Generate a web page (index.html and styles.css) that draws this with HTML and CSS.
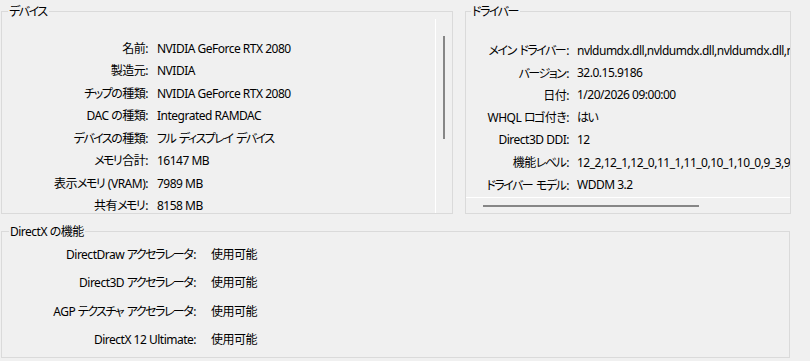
FILE: index.html
```html
<!DOCTYPE html>
<html lang="ja">
<head>
    <meta charset="UTF-8">
    <meta name="viewport" content="width=device-width, initial-scale=1.0">
    <title>ディスプレイ</title>
    <link rel="stylesheet" href="styles.css">
</head>
<body>
    <div class="top">
        <!-- デバイス -->
        <fieldset class="group device">
            <legend><span class="k">デバイス</span></legend>
            <div class="pane">
                <div class="rows device-rows">
                    <div class="label">名前:</div><div class="value">NVIDIA GeForce RTX 2080</div>
                    <div class="label">製造元:</div><div class="value">NVIDIA</div>
                    <div class="label"><span class="k">チップの</span>種類:</div><div class="value">NVIDIA GeForce RTX 2080</div>
                    <div class="label">DAC の種類:</div><div class="value">Integrated RAMDAC</div>
                    <div class="label"><span class="k">デバイスの</span>種類:</div><div class="value"><span class="k">フル</span> <span class="k">ディスプレイ</span> <span class="k">デバイス</span></div>
                    <div class="label"><span class="k">メモリ</span>合計:</div><div class="value">16147 MB</div>
                    <div class="label">表示<span class="k">メモリ</span> (VRAM):</div><div class="value">7989 MB</div>
                    <div class="label">共有<span class="k">メモリ</span>:</div><div class="value">8158 MB</div>
                </div>
                <div class="vscroll"><div class="thumb"></div></div>
            </div>
        </fieldset>

        <!-- ドライバー -->
        <fieldset class="group driver">
            <legend><span class="k">ドライバー</span></legend>
            <div class="pane-col">
                <div class="rows driver-rows">
                    <div class="label"><span class="k">メイン</span> <span class="k">ドライバー</span>:</div><div class="value">nvldumdx.dll,nvldumdx.dll,nvldumdx.dll,nvldumdx.dll</div>
                    <div class="label"><span class="k">バージョン</span>:</div><div class="value">32.0.15.9186</div>
                    <div class="label">日付:</div><div class="value">1/20/2026 09:00:00</div>
                    <div class="label">WHQL <span class="k">ロゴ</span>付き:</div><div class="value"><span class="k">はい</span></div>
                    <div class="label">Direct3D DDI:</div><div class="value">12</div>
                    <div class="label">機能<span class="k">レベル</span>:</div><div class="value">12_2,12_1,12_0,11_1,11_0,10_1,10_0,9_3,9_2,9_1</div>
                    <div class="label"><span class="k">ドライバー</span> <span class="k">モデル</span>:</div><div class="value">WDDM 3.2</div>
                </div>
                <div class="hscroll"><div class="thumb"></div></div>
            </div>
        </fieldset>
    </div>

    <!-- DirectX の機能 -->
    <fieldset class="group features">
        <legend>DirectX の機能</legend>
        <div class="rows feature-rows">
            <div class="label">DirectDraw <span class="k">アクセラレータ</span>:</div><div class="value">使用可能</div>
            <div class="label">Direct3D <span class="k">アクセラレータ</span>:</div><div class="value">使用可能</div>
            <div class="label">AGP <span class="k">テクスチャ</span> <span class="k">アクセラレータ</span>:</div><div class="value">使用可能</div>
            <div class="label">DirectX 12 Ultimate:</div><div class="value">使用可能</div>
        </div>
    </fieldset>
</body>
</html>
```

FILE: styles.css
```css
body {
    margin: 0;
    padding: 4px 0 0 1px;
    background-color: #f0f0f0;
    color: #000;
    font-family: "Noto Sans", "Noto Sans CJK JP", sans-serif;
    font-size: 12px;
    letter-spacing: -0.5px;
    font-feature-settings: "palt";
}

/* kana runs: Yu Gothic UI draws them narrower */
.k {
    letter-spacing: -1.5px;
    margin-right: 1px;
}

.top {
    display: flex;
    gap: 12px;
}

.group {
    margin: 0;
    padding: 0;
    min-width: 0;
    border: 1px solid #dadada;
}

.group legend {
    padding: 0 1px;
    line-height: 15px;
}

.device {
    width: 452px;
    box-sizing: border-box;
}

.device legend {
    margin-left: 6px;
}

.driver {
    width: 326px;
    box-sizing: border-box;
}

.driver legend {
    margin-left: 5px;
}

.pane {
    display: flex;
    height: 194px;
}

.pane-col {
    display: flex;
    flex-direction: column;
    height: 194px;
}

.rows {
    display: grid;
    align-content: start;
    white-space: nowrap;
    overflow: hidden;
}

.rows .label {
    text-align: right;
}

.device-rows {
    flex: 1;
    padding-top: 23.5px;
    grid-template-columns: 146px 1fr;
    grid-auto-rows: 12px;
    row-gap: 10.5px;
    column-gap: 9px;
    line-height: 12px;
}

.driver-rows {
    flex: 1;
    padding-top: 20px;
    grid-template-columns: 103px 1fr;
    grid-auto-rows: 22.4px;
    column-gap: 8px;
    align-items: center;
}

.vscroll {
    width: 16px;
    border-left: 1px solid #fff;
}

.vscroll .thumb {
    width: 2px;
    height: 103px;
    margin: 17px 0 0 7px;
    background-color: #868686;
}

.hscroll {
    height: 15px;
    border-top: 1px solid #fff;
}

.hscroll .thumb {
    width: 216px;
    height: 2px;
    margin: 7px 0 0 17px;
    background-color: #868686;
}

.features {
    margin-top: 10px;
    width: 789px;
    height: 134px;
    box-sizing: border-box;
}

.features legend {
    margin-left: 7px;
}

.feature-rows {
    padding-top: 1px;
    grid-template-columns: 194px 1fr;
    grid-auto-rows: 28.33px;
    column-gap: 15px;
    align-items: center;
}
```
